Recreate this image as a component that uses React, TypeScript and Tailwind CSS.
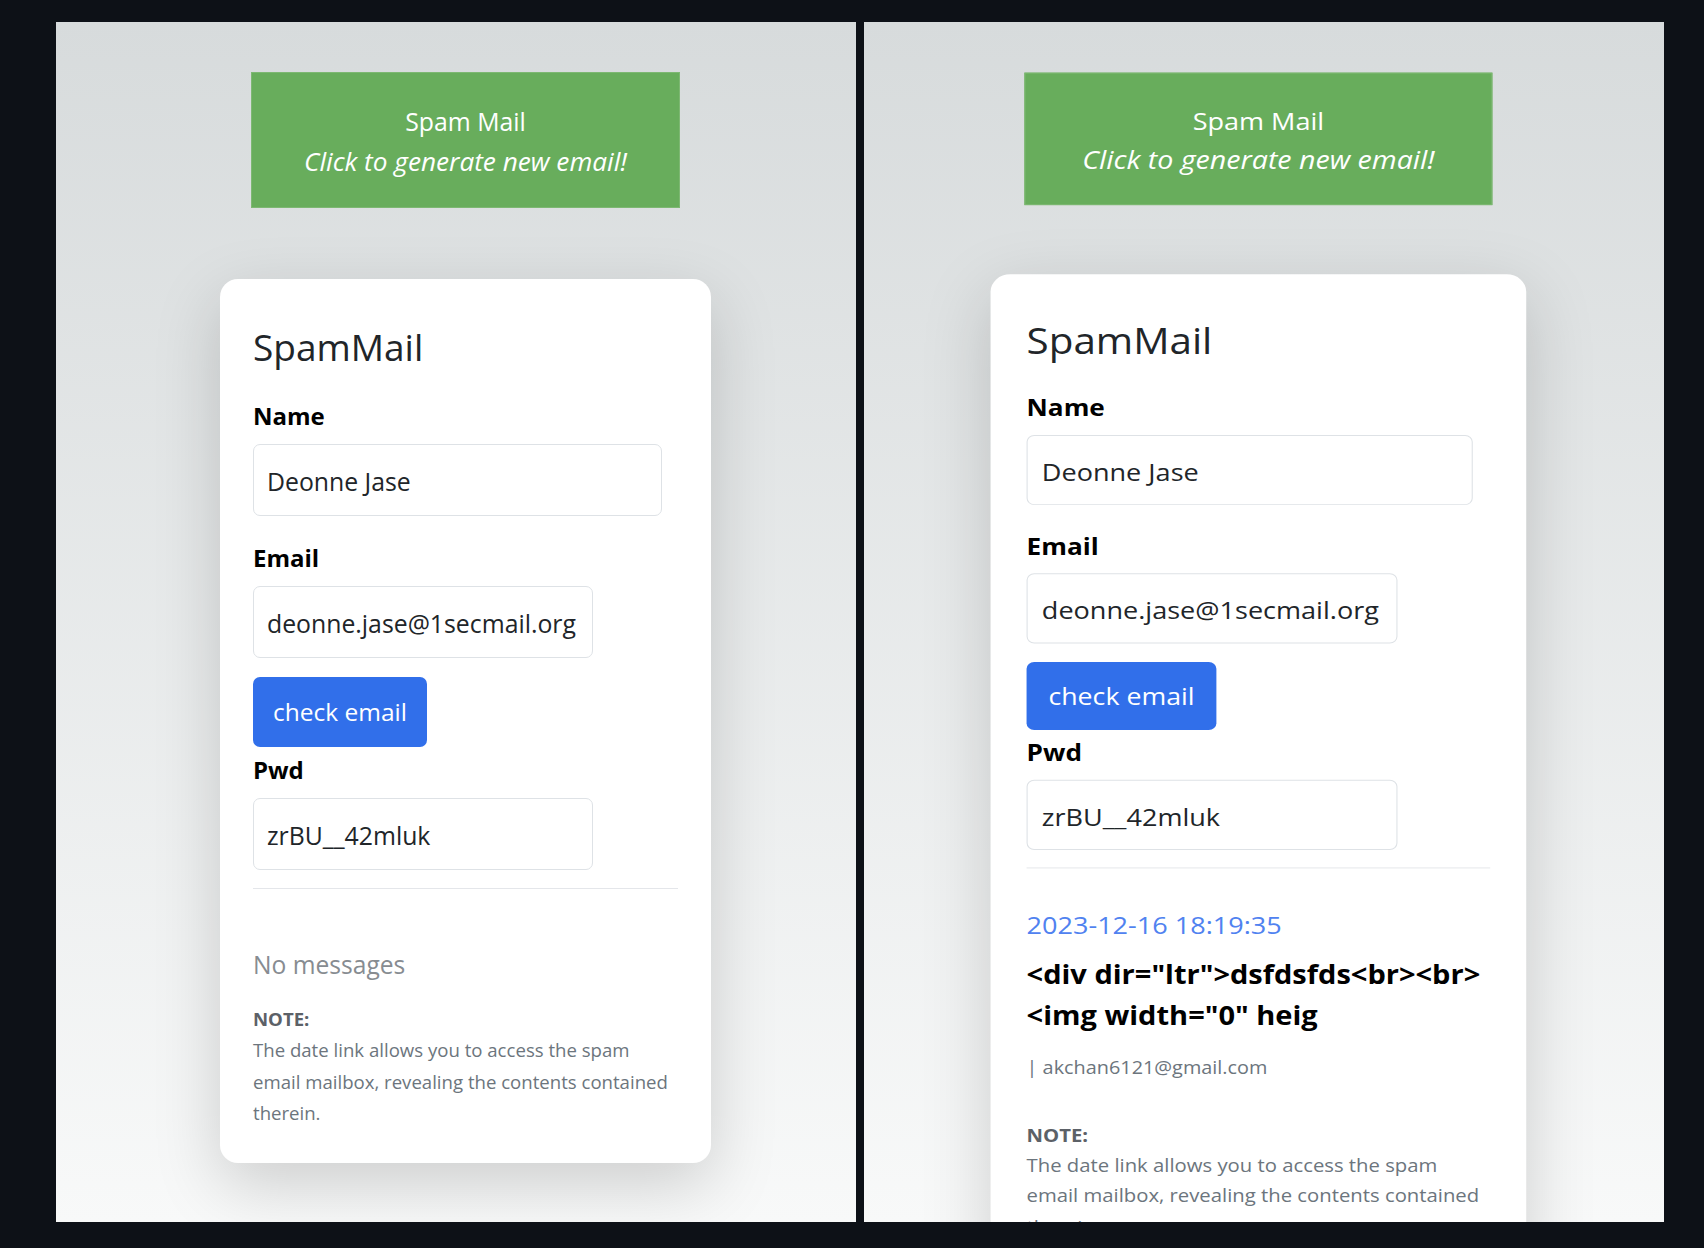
import React from 'react';

type Mail = { date: string; subject: string[]; from: string };

const received: Mail[] = [
  {
    date: '2023-12-16 18:19:35',
    subject: ['<div dir="ltr">dsfdsfds<br><br>', '<img width="0" heig'],
    from: 'akchan6121@gmail.com',
  },
];

const Label: React.FC<{ text: string; className: string }> = ({ text, className }) => (
  <label className={`block text-[24px] leading-[36px] font-bold text-black ${className}`}>{text}</label>
);

const Field: React.FC<{ value: string; className: string }> = ({ value, className }) => (
  <div
    className={`mt-[10px] flex h-[72px] items-center rounded-[7px] border border-[#dee2e6] bg-white px-[13px] pt-[3px] text-[24.8px] text-[#212529] ${className}`}
  >
    {value}
  </div>
);

const SpamMailPage: React.FC<{ mails: Mail[]; className: string }> = ({ mails, className }) => (
  <div className={`flex w-[491px] flex-col ${className}`}>
    {/* Generate banner */}
    <button className="mx-auto flex h-[136px] w-[429px] flex-col items-center justify-center border border-[#7db872] bg-[#68ad5c] pt-[2px] text-white">
      <span className="text-[24.8px] leading-[40px]">Spam Mail</span>
      <span className="text-[26.2px] leading-[40px] italic">Click to generate new email!</span>
    </button>

    {/* Card */}
    <div className="mt-[71px] rounded-[18px] bg-white px-[33px] pt-[33px] pb-[34px] shadow-[0_22px_66px_rgba(0,0,0,0.17)]">
      <h1 className="mt-[13px] text-[37px] leading-[44px] font-normal text-[#212529]">SpamMail</h1>

      <Label text="Name" className="mt-[29px]" />
      <Field value="Deonne Jase" className="w-[409px]" />

      <Label text="Email" className="mt-[24px]" />
      <Field value="deonne.jase@1secmail.org" className="w-[340px]" />

      <button className="mt-[19px] h-[70px] w-[174px] rounded-[7px] bg-[#316fea] text-[24.5px] text-white">
        check email
      </button>

      <Label text="Pwd" className="mt-[5px]" />
      <Field value="zrBU__42mluk" className="w-[340px]" />

      <hr className="mt-[18px] border-0 border-t border-[#e4e6ea]" />

      {mails.length === 0 ? (
        <p className="mt-[58px] text-[24.6px] leading-[36px] text-[#878c91]">No messages</p>
      ) : (
        mails.map(mail => (
          <div key={mail.date}>
            <a className="mt-[39px] block text-[24.8px] leading-[36px] text-[#5082f0]">{mail.date}</a>
            <h5 className="mt-[14px] text-[26.6px] leading-[41.8px] font-bold text-black">
              {mail.subject[0]}
              <br />
              {mail.subject[1]}
            </h5>
            <p className="mt-[17px] text-[18.2px] leading-[28px] text-[#6c757d]">| {mail.from}</p>
          </div>
        ))
      )}

      <p className={`${mails.length === 0 ? 'mt-[20px]' : 'mt-[40px]'} pr-[6px] text-[18.6px] leading-[31.4px] text-[#6c757d]`}>
        <b className="text-[#5c6167]">NOTE:</b>
        <br />
        The date link allows you to access the spam email mailbox, revealing the contents contained therein.
      </p>
    </div>
  </div>
);

export default function App() {
  return (
    <div className="flex min-h-screen gap-[8px] bg-[#0d1117] pt-[22px] pl-[56px] font-['Open_Sans',sans-serif]">
      {/* Empty inbox */}
      <div className="h-[1200px] w-[800px] overflow-hidden bg-linear-to-b from-[#d7dbdc] to-[#f8f9f9] pt-[50px]">
        <SpamMailPage mails={[]} className="ml-[164px]" />
      </div>

      {/* Inbox with one mail, captured at a wider zoom */}
      <div className="h-[1200px] w-[800px] overflow-hidden bg-linear-to-b from-[#d7dbdc] to-[#f8f9f9]">
        <div className="h-[1232px] w-[734px] origin-top-left scale-x-[1.091] scale-y-[0.974] pt-[52px]">
          <SpamMailPage mails={received} className="ml-[116px]" />
        </div>
      </div>
    </div>
  );
}
